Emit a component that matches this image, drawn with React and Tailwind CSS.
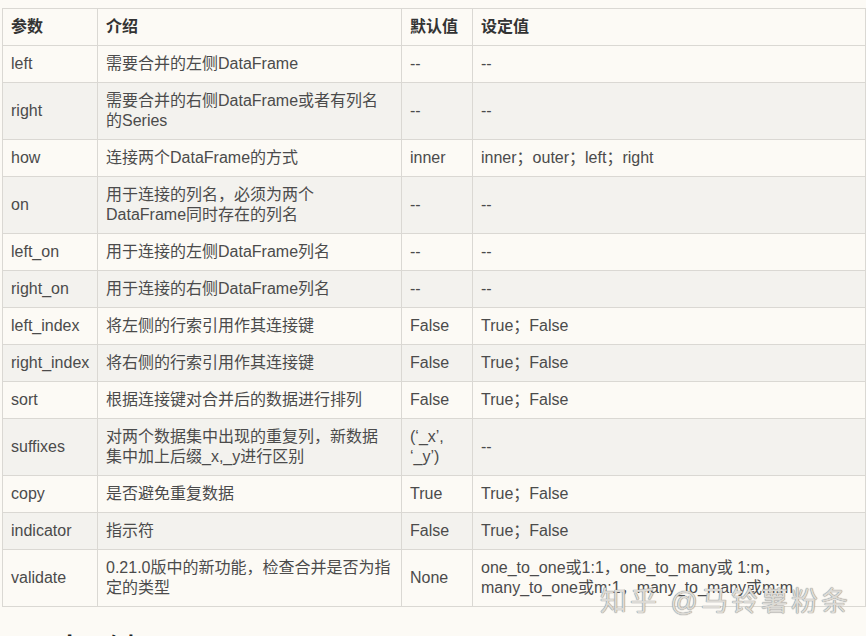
import React from "react";

const rows = [
  ["left", ["需要合并的左侧DataFrame"], ["--"], ["--"]],
  ["right", ["需要合并的右侧DataFrame或者有列名", "的Series"], ["--"], ["--"]],
  ["how", ["连接两个DataFrame的方式"], ["inner"], ["inner；outer；left；right"]],
  ["on", ["用于连接的列名，必须为两个", "DataFrame同时存在的列名"], ["--"], ["--"]],
  ["left_on", ["用于连接的左侧DataFrame列名"], ["--"], ["--"]],
  ["right_on", ["用于连接的右侧DataFrame列名"], ["--"], ["--"]],
  ["left_index", ["将左侧的行索引用作其连接键"], ["False"], ["True；False"]],
  ["right_index", ["将右侧的行索引用作其连接键"], ["False"], ["True；False"]],
  ["sort", ["根据连接键对合并后的数据进行排列"], ["False"], ["True；False"]],
  ["suffixes", ["对两个数据集中出现的重复列，新数据", "集中加上后缀_x,_y进行区别"], ["(‘_x’,", "‘_y’)"], ["--"]],
  ["copy", ["是否避免重复数据"], ["True"], ["True；False"]],
  ["indicator", ["指示符"], ["False"], ["True；False"]],
  ["validate", ["0.21.0版中的新功能，检查合并是否为指", "定的类型"], ["None"], ["one_to_one或1:1，one_to_many或 1:m，", "many_to_one或m:1，many_to_many或m:m"]],
];

function Lines({ lines }) {
  return lines.map((l, i) => (
    <React.Fragment key={i}>
      {i > 0 && <br />}
      {l}
    </React.Fragment>
  ));
}

export default function App() {
  const font = { fontFamily: '"Liberation Sans", Arial, "Noto Sans CJK SC", sans-serif' };
  return (
    <div className="relative w-[866px] h-[636px] overflow-hidden bg-[#fcfaf5]" style={font}>
      <div className="pt-[8px] pl-[2px]">
        <table className="table-fixed border-collapse w-[863px] text-[16px] leading-[20px] text-[#4b4b4b]">
          <colgroup>
            <col className="w-[95px]" />
            <col className="w-[304px]" />
            <col className="w-[71px]" />
            <col className="w-[393px]" />
          </colgroup>
          <thead>
            <tr className="bg-[#fcfaf5]">
              {["参数", "介绍", "默认值", "设定值"].map((h) => (
                <th key={h} className="border border-[#dad8d3] pl-[8px] pr-[4px] py-[8px] text-left font-bold text-[#333]">
                  {h}
                </th>
              ))}
            </tr>
          </thead>
          <tbody>
            {rows.map((r, i) => (
              <tr key={r[0]} className={i % 2 === 1 ? "bg-[#f3f2ee]" : "bg-[#fcfaf5]"}>
                <td className="border border-[#dad8d3] pl-[8px] pr-[2px] py-[8px] align-middle whitespace-nowrap">{r[0]}</td>
                <td className="border border-[#dad8d3] pl-[8px] pr-[2px] py-[8px] align-middle whitespace-nowrap">
                  <Lines lines={r[1]} />
                </td>
                <td className="border border-[#dad8d3] pl-[8px] pr-[2px] py-[8px] align-middle whitespace-nowrap">
                  <Lines lines={r[2]} />
                </td>
                <td className="border border-[#dad8d3] pl-[8px] pr-[2px] py-[8px] align-middle whitespace-nowrap">
                  <Lines lines={r[3]} />
                </td>
              </tr>
            ))}
          </tbody>
        </table>
        <div className="mt-[25px] pl-[2px] text-[26px] leading-[32px] font-bold text-[#222]">下一步示例</div>
      </div>
      <div
        className="absolute left-[600px] top-[584px] text-[27px] leading-[36px] tracking-[3px] text-[#dcdad5] whitespace-nowrap"
        style={{ ...font, textShadow: "0 0 1px #8a8a8a, 0 0 1px #8a8a8a" }}
      >
        知乎 @马铃薯粉条
      </div>
    </div>
  );
}
